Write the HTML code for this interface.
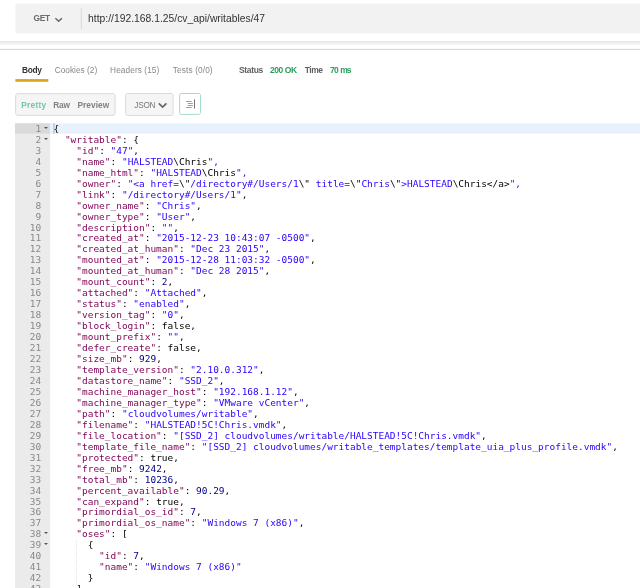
<!DOCTYPE html>
<html><head><meta charset="utf-8"><title>Postman</title>
<style>
html,body{margin:0;padding:0;background:#fff;}
body{width:640px;height:588px;overflow:hidden;position:relative;font-family:"Liberation Sans",sans-serif;color:#505050;}
.t{position:absolute;white-space:nowrap;line-height:12px;height:12px;}
.b{font-weight:bold;}
#ed{position:absolute;left:0;top:123px;width:640px;height:465px;overflow:hidden;}
#gl{position:absolute;left:15px;top:0;width:35.5px;color:#888;font:9.483px/11px "DejaVu Sans Mono","Liberation Mono",monospace;text-align:right;}
#gl div{height:11px;padding-right:9.4px;position:relative;}
#gl div.c,#code div.c{height:10px;}
#gl .f{position:absolute;right:2.7px;top:4px;width:0;height:0;border-left:2px solid transparent;border-right:2px solid transparent;border-top:2.4px solid #555;}
#code{position:absolute;left:53.5px;top:0;margin:0;font:9.483px/11px "DejaVu Sans Mono","Liberation Mono",monospace;color:#000;}
#code div{height:11px;white-space:pre;}
.k{color:rgb(127,0,85);}
.s{color:rgb(42,0,255);}
.n{color:#00008b;}
#wrap{position:absolute;left:0;top:0;width:640px;height:588px;will-change:transform;}
#ig{position:absolute;left:76px;top:416.5px;width:1px;height:44.5px;background:repeating-linear-gradient(#c4c4c4 0,#c4c4c4 1px,rgba(255,255,255,0) 1px,rgba(255,255,255,0) 2px);opacity:.5;}

</style></head><body><div id="wrap">
<svg id="bg" width="640" height="588" viewBox="0 0 640 588" style="position:absolute;left:0;top:0">
<defs><linearGradient id="sh" x1="0" y1="0" x2="0" y2="1"><stop offset="0" stop-color="#dedede"/><stop offset=".2" stop-color="#ebebeb"/><stop offset=".65" stop-color="#f5f5f5"/><stop offset="1" stop-color="#ffffff"/></linearGradient></defs>
<rect x="15.4" y="3.6" width="630" height="29.8" rx="1.5" fill="#f2f2f2"/>
<rect x="80.8" y="8.3" width="1" height="20.6" fill="#d8d8d8"/>
<rect x="0" y="41.2" width="640" height="4.5" fill="url(#sh)"/>
<rect x="0" y="48.9" width="640" height="1" fill="#d2d2d2"/>
<rect x="15.4" y="79.1" width="32.9" height="2.65" fill="#d9a31a"/>
<rect x="15.65" y="93.7" width="99.4" height="21.6" rx="2" fill="#f5f5f5" stroke="#dadada"/>
<rect x="125.6" y="93.5" width="47.5" height="22" rx="2" fill="#f5f5f5" stroke="#dadada"/>
<rect x="179.6" y="93.5" width="20.9" height="20.9" rx="1.8" fill="#fff" stroke="#a5dccb"/>
<rect x="15.1" y="123.3" width="35.1" height="470" fill="#ebebeb"/>
<rect x="15.1" y="123.3" width="35.1" height="10.4" fill="#dadada"/>
<rect x="50.2" y="123.3" width="600" height="10.4" fill="#e8f2fe"/>
<rect x="53.1" y="123.3" width="1.8" height="10.4" fill="#c0cce2"/>
</svg>
<div class="t b" id="get" style="left:33.50px;letter-spacing:-0.35px;top:12.2px;font-size:8.4px;color:#6a6a6a;">GET</div>
<svg style="position:absolute;left:54px;top:15px" width="10" height="8" viewBox="0 0 10 8"><path d="M1.4 3.2 L4.65 6.2 L7.9 3.2" fill="none" stroke="#666" stroke-width="1.5"/></svg>
<div class="t" id="url" style="left:88.0px;letter-spacing:0.02px;top:12.8px;font-size:10.3px;color:#333;">http://192.168.1.25/cv_api/writables/47</div>
<div class="t b" id="body" style="left:22.10px;letter-spacing:-0.35px;top:64px;font-size:8.3px;color:#333;">Body</div>
<div class="t" id="cookies" style="left:54.75px;top:64px;font-size:8.3px;color:#888;">Cookies (2)</div>
<div class="t" id="headers" style="left:110.10px;letter-spacing:0.07px;top:64px;font-size:8.3px;color:#888;">Headers (15)</div>
<div class="t" id="tests" style="left:172.80px;letter-spacing:0.11px;top:64px;font-size:8.3px;color:#888;">Tests (0/0)</div>
<div class="t b" id="status" style="left:239.05px;letter-spacing:-0.35px;top:64px;font-size:8.5px;color:#606060;">Status</div>
<div class="t b" id="ok" style="left:270.00px;letter-spacing:-0.44px;top:64px;font-size:8.5px;color:#2a9d5c;">200 OK</div>
<div class="t b" id="time" style="left:304.75px;letter-spacing:-0.48px;top:64px;font-size:8.5px;color:#606060;">Time</div>
<div class="t b" id="ms" style="left:329.90px;letter-spacing:-0.6px;word-spacing:0.3px;top:64px;font-size:8.5px;color:#2a9d5c;">70 <span style="letter-spacing:-0.95px">ms</span></div>
<div class="t b" id="pretty" style="left:21.20px;letter-spacing:0.28px;top:99px;font-size:8.3px;color:#6cc9ab;">Pretty</div>
<div class="t b" id="raw" style="left:53.30px;letter-spacing:-0.2px;top:99px;font-size:8.3px;color:#808080;">Raw</div>
<div class="t b" id="preview" style="left:77.40px;letter-spacing:0.07px;top:99px;font-size:8.3px;color:#808080;">Preview</div>
<div class="t" id="json" style="left:134.30px;letter-spacing:-0.3px;top:99px;font-size:8.3px;color:#777;">JSON</div>
<svg style="position:absolute;left:157px;top:101px" width="12" height="9" viewBox="0 0 12 9"><path d="M1.8 2.3 L5.6 6 L9.4 2.3" fill="none" stroke="#666" stroke-width="1.7"/></svg>
<svg style="position:absolute;left:179px;top:93px" width="22" height="22" viewBox="0 0 22 22"><g stroke="#929292" stroke-width=".9" fill="none"><path d="M7 8.5H12.7M8.7 10.5H13.9M8.7 12.5H13.9M7 14.5H12.7"/><path d="M15.5 6.3V15.6" stroke="#666"/></g></svg>

<div id="ed">
<div id="gl">
<div>1<i class="f"></i></div>
<div>2<i class="f"></i></div>
<div>3</div>
<div>4</div>
<div>5</div>
<div>6</div>
<div>7</div>
<div>8</div>
<div>9</div>
<div class="c">10</div>
<div>11</div>
<div>12</div>
<div>13</div>
<div>14</div>
<div>15</div>
<div>16</div>
<div>17</div>
<div>18</div>
<div>19</div>
<div>20</div>
<div>21</div>
<div>22</div>
<div>23</div>
<div>24</div>
<div>25</div>
<div>26</div>
<div>27</div>
<div>28</div>
<div>29</div>
<div>30</div>
<div>31</div>
<div>32</div>
<div>33</div>
<div>34</div>
<div class="c">35</div>
<div>36</div>
<div>37</div>
<div>38<i class="f"></i></div>
<div>39<i class="f"></i></div>
<div>40</div>
<div>41</div>
<div>42</div>
<div>43</div>
</div>
<div id="ig"></div>
<div id="code">
<div>{</div>
<div>  <span class="k">"writable"</span>: {</div>
<div>    <span class="k">"id"</span>: <span class="s">"47"</span>,</div>
<div>    <span class="k">"name"</span>: <span class="s">"HALSTEAD</span>\Chris<span class="s">",</span></div>
<div>    <span class="k">"name_html"</span>: <span class="s">"HALSTEAD</span>\Chris<span class="s">",</span></div>
<div>    <span class="k">"owner"</span>: <span class="s">"&lt;a href=</span>\"<span class="s">/directory#/Users/1</span>\"<span class="s"> title=</span>\"<span class="s">Chris</span>\"<span class="s">&gt;HALSTEAD</span>\Chris&lt;/a&gt;<span class="s">",</span></div>
<div>    <span class="k">"link"</span>: <span class="s">"/directory#/Users/1"</span>,</div>
<div>    <span class="k">"owner_name"</span>: <span class="s">"Chris"</span>,</div>
<div>    <span class="k">"owner_type"</span>: <span class="s">"User"</span>,</div>
<div class="c">    <span class="k">"description"</span>: <span class="s">""</span>,</div>
<div>    <span class="k">"created_at"</span>: <span class="s">"2015-12-23 10:43:07 -0500"</span>,</div>
<div>    <span class="k">"created_at_human"</span>: <span class="s">"Dec 23 2015"</span>,</div>
<div>    <span class="k">"mounted_at"</span>: <span class="s">"2015-12-28 11:03:32 -0500"</span>,</div>
<div>    <span class="k">"mounted_at_human"</span>: <span class="s">"Dec 28 2015"</span>,</div>
<div>    <span class="k">"mount_count"</span>: <span class="n">2</span>,</div>
<div>    <span class="k">"attached"</span>: <span class="s">"Attached"</span>,</div>
<div>    <span class="k">"status"</span>: <span class="s">"enabled"</span>,</div>
<div>    <span class="k">"version_tag"</span>: <span class="s">"0"</span>,</div>
<div>    <span class="k">"block_login"</span>: false,</div>
<div>    <span class="k">"mount_prefix"</span>: <span class="s">""</span>,</div>
<div>    <span class="k">"defer_create"</span>: false,</div>
<div>    <span class="k">"size_mb"</span>: <span class="n">929</span>,</div>
<div>    <span class="k">"template_version"</span>: <span class="s">"2.10.0.312"</span>,</div>
<div>    <span class="k">"datastore_name"</span>: <span class="s">"SSD_2"</span>,</div>
<div>    <span class="k">"machine_manager_host"</span>: <span class="s">"192.168.1.12"</span>,</div>
<div>    <span class="k">"machine_manager_type"</span>: <span class="s">"VMware vCenter"</span>,</div>
<div>    <span class="k">"path"</span>: <span class="s">"cloudvolumes/writable"</span>,</div>
<div>    <span class="k">"filename"</span>: <span class="s">"HALSTEAD!5C!Chris.vmdk"</span>,</div>
<div>    <span class="k">"file_location"</span>: <span class="s">"[SSD_2] cloudvolumes/writable/HALSTEAD!5C!Chris.vmdk"</span>,</div>
<div>    <span class="k">"template_file_name"</span>: <span class="s">"[SSD_2] cloudvolumes/writable_templates/template_uia_plus_profile.vmdk"</span>,</div>
<div>    <span class="k">"protected"</span>: true,</div>
<div>    <span class="k">"free_mb"</span>: <span class="n">9242</span>,</div>
<div>    <span class="k">"total_mb"</span>: <span class="n">10236</span>,</div>
<div>    <span class="k">"percent_available"</span>: <span class="n">90.29</span>,</div>
<div class="c">    <span class="k">"can_expand"</span>: true,</div>
<div>    <span class="k">"primordial_os_id"</span>: <span class="n">7</span>,</div>
<div>    <span class="k">"primordial_os_name"</span>: <span class="s">"Windows 7 (x86)"</span>,</div>
<div>    <span class="k">"oses"</span>: [</div>
<div>      {</div>
<div>        <span class="k">"id"</span>: <span class="n">7</span>,</div>
<div>        <span class="k">"name"</span>: <span class="s">"Windows 7 (x86)"</span></div>
<div>      }</div>
<div>    ],</div>
</div>
</div>
</div></body></html>
